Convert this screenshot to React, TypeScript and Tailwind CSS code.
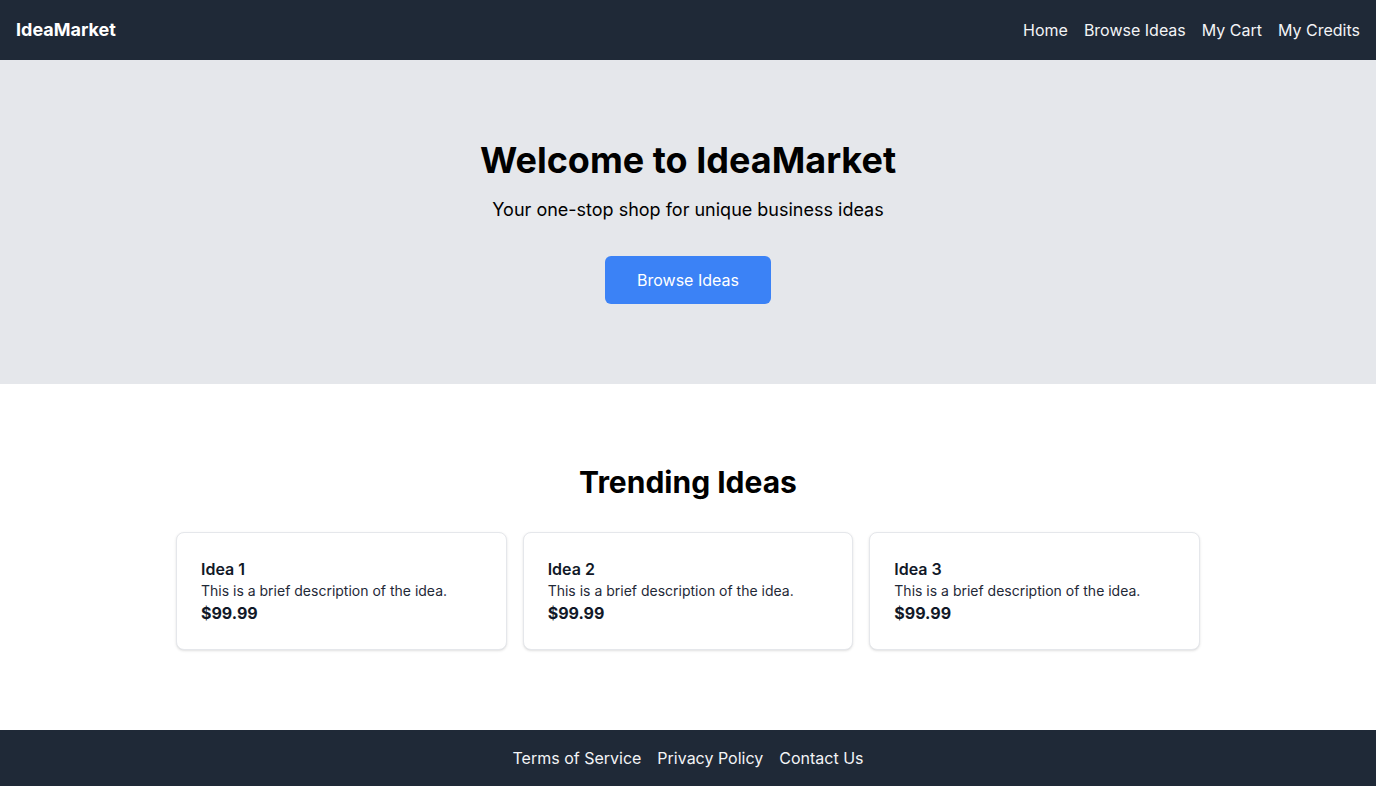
const navLinks = ["Home", "Browse Ideas", "My Cart", "My Credits"];
const footerLinks = ["Terms of Service", "Privacy Policy", "Contact Us"];

const ideas = [
  { id: 1, title: "Idea 1", description: "This is a brief description of the idea.", price: "$99.99" },
  { id: 2, title: "Idea 2", description: "This is a brief description of the idea.", price: "$99.99" },
  { id: 3, title: "Idea 3", description: "This is a brief description of the idea.", price: "$99.99" },
];

function App() {
  return (
    <div className="min-h-screen flex flex-col bg-white text-black font-['Inter',sans-serif]">
      <nav className="bg-[#1f2937] text-white px-4 py-4 flex items-center justify-between">
        <a href="#" className="text-lg font-bold">
          IdeaMarket
        </a>
        <div className="flex items-center gap-4 text-base text-[#f3f4f6]">
          {navLinks.map((link) => (
            <a key={link} href="#" className="hover:text-white">
              {link}
            </a>
          ))}
        </div>
      </nav>

      <section className="bg-[#e5e7eb] py-20 text-center">
        <h1 className="text-4xl font-bold mb-4">Welcome to IdeaMarket</h1>
        <p className="text-lg mb-8">Your one-stop shop for unique business ideas</p>
        <button className="bg-[#3b82f6] hover:bg-[#2563eb] text-white text-base px-8 py-3 rounded-md">
          Browse Ideas
        </button>
      </section>

      <section className="py-20">
        <div className="max-w-5xl mx-auto">
          <h2 className="text-3xl font-bold text-center mb-8">Trending Ideas</h2>
          <div className="grid grid-cols-3 gap-4">
            {ideas.map((idea) => (
              <article
                key={idea.id}
                className="border border-[#e5e7eb] rounded-lg shadow-sm p-6 bg-white"
              >
                <h3 className="text-base font-semibold text-[#111827]">{idea.title}</h3>
                <p className="text-sm text-[#1f2937]">{idea.description}</p>
                <p className="text-base leading-6 font-bold text-[#111827]">{idea.price}</p>
              </article>
            ))}
          </div>
        </div>
      </section>

      <footer className="bg-[#1f2937] text-[#f3f4f6] py-4 mt-auto flex justify-center gap-4 text-base">
        {footerLinks.map((link) => (
          <a key={link} href="#" className="hover:text-white">
            {link}
          </a>
        ))}
      </footer>
    </div>
  );
}

export default App;
